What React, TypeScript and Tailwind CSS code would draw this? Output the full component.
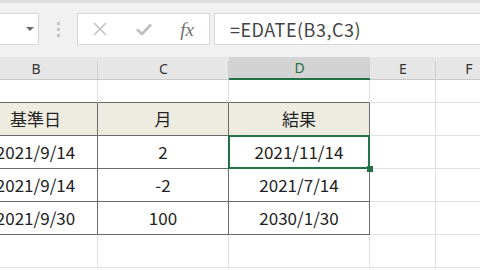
import React from 'react';

const cols = [
  { key: 'B', w: 124 },
  { key: 'C', w: 131 },
  { key: 'D', w: 141 },
  { key: 'E', w: 66 },
  { key: 'F', w: 66 },
];

const rows = [
  ['基準日', '月', '結果'],
  ['2021/9/14', '2', '2021/11/14'],
  ['2021/9/14', '-2', '2021/7/14'],
  ['2021/9/30', '100', '2030/1/30'],
];

const cellFont = { fontFamily: '"Noto Sans CJK JP", "Liberation Sans", sans-serif' };

const FormulaBar: React.FC = () => (
  <div className="h-[57px] bg-[#f1f1f1] border-t-[3px] border-[#dedede] flex items-start pt-[10px]">
    <div className="w-[39px] h-[32px] bg-white border border-l-0 border-[#d6d6d6] relative">
      <div className="absolute left-[26px] top-[13px] w-0 h-0 border-l-[4px] border-r-[4px] border-t-[4px] border-l-transparent border-r-transparent border-t-[#6a6a6a]" />
    </div>
    <div className="w-[38px] h-[32px] flex flex-col items-center justify-center gap-[3px]">
      <div className="w-[3px] h-[3px] bg-[#c4c4c4]" />
      <div className="w-[3px] h-[3px] bg-[#c4c4c4]" />
      <div className="w-[3px] h-[3px] bg-[#c4c4c4]" />
    </div>
    <div className="w-[133px] h-[32px] bg-white border border-[#d6d6d6] flex items-center">
      <div className="w-[44px] flex justify-center">
        <svg width="14" height="14" viewBox="0 0 14 14">
          <path d="M1 1 L13 13 M13 1 L1 13" stroke="#bdbdbd" strokeWidth="1.4" fill="none" />
        </svg>
      </div>
      <div className="w-[44px] flex justify-center">
        <svg width="16" height="13" viewBox="0 0 16 13">
          <path d="M1 6.5 L6 11 L15 1.5" stroke="#bdbdbd" strokeWidth="2.6" fill="none" />
        </svg>
      </div>
      <div className="w-[44px] flex justify-center">
        <span className="text-[19px] italic text-[#6f6f6f] leading-none" style={{ fontFamily: '"Liberation Serif", serif' }}>
          fx
        </span>
      </div>
    </div>
    <div className="w-[4px]" />
    <div className="flex-1 h-[32px] bg-white border border-r-0 border-[#d6d6d6] flex items-center pl-[15px]">
      <span className="text-[18px] text-[#444] tracking-[0.5px]" style={cellFont}>
        =EDATE(B3,C3)
      </span>
    </div>
  </div>
);

const HeaderRow: React.FC = () => (
  <div className="flex h-[23px] ml-[-26px]">
    {cols.map((c) => {
      const sel = c.key === 'D';
      return (
        <div
          key={c.key}
          className={`shrink-0 relative flex items-center justify-center text-[14px] ${
            sel ? 'bg-[#d3d3d3] text-[#217346] border-b-2 border-[#217346]' : 'bg-[#e6e6e6] text-[#333] border-b border-[#c9c9c9]'
          }`}
          style={{ width: c.w, fontFamily: '"Noto Sans", sans-serif' }}
        >
          {c.key}
          <div className="absolute right-0 top-[4px] bottom-0 w-px bg-[#cdcdcd]" />
        </div>
      );
    })}
  </div>
);

export default function App() {
  return (
    <div className="w-[480px] h-[270px] overflow-hidden bg-white">
      <FormulaBar />
      <HeaderRow />
      <div className="ml-[-26px]">
        {/* row 1 */}
        <div className="flex h-[23px]">
          {cols.map((c, i) => (
            <div
              key={c.key}
              className={`shrink-0 border-r border-b ${i < 3 ? 'border-b-[#6b6b6b] border-r-[#e2e2e2]' : 'border-[#e2e2e2]'}`}
              style={{ width: c.w }}
            />
          ))}
        </div>
        {rows.map((r, ri) => (
          <div key={ri} className="flex h-[33px]">
            {cols.map((c, i) => {
              const inTable = i < 3;
              const isSel = ri === 1 && i === 2;
              return (
                <div
                  key={c.key}
                  className={`shrink-0 relative flex items-center justify-center text-[17px] text-[#222] border-r border-b ${
                    inTable ? 'border-[#6b6b6b]' : 'border-[#e2e2e2]'
                  } ${ri === 0 && inTable ? 'bg-[#eeece1]' : ''}`}
                  style={{ width: c.w, ...cellFont }}
                >
                  {inTable ? r[i] : ''}
                  {isSel && (
                    <>
                      <div className="absolute left-[-1px] top-[-1px] right-[-1px] bottom-[-1px] border-2 border-[#217346]" />
                      <div className="absolute z-10 right-[-4px] bottom-[-4px] w-[6px] h-[6px] bg-[#217346]" />
                    </>
                  )}
                </div>
              );
            })}
          </div>
        ))}
        <div className="flex h-[33px]">
          {cols.map((c) => (
            <div key={c.key} className="shrink-0 border-r border-b border-[#e2e2e2]" style={{ width: c.w }} />
          ))}
        </div>
      </div>
    </div>
  );
}
